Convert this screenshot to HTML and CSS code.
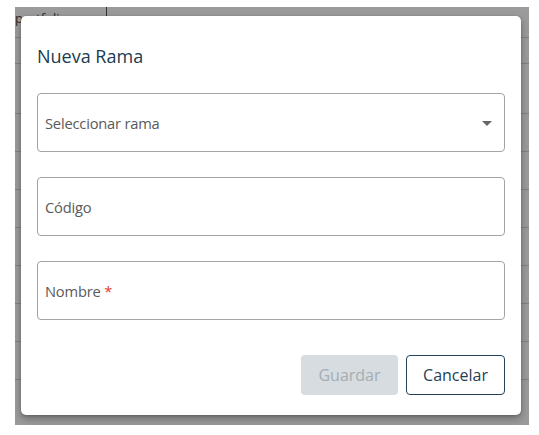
FILE: index.html
```html
<!DOCTYPE html>
<html lang="es">
<head>
<meta charset="utf-8">
<title>Nueva Rama</title>
<link rel="stylesheet" href="styles.css">
</head>
<body>
<div class="stage">
  <div class="table">
    <div class="row r1"><span class="cell c1">portfolio</span><span class="cell c2"></span></div>
    <div class="row r2"></div>
    <div class="row r3"></div>
    <div class="row r4"></div>
    <div class="row r4"></div>
    <div class="row r4"></div>
    <div class="row r4"></div>
    <div class="row r4"></div>
    <div class="row r4"></div>
    <div class="row r4"></div>
  </div>
  <div class="dialog" role="dialog">
    <h2 class="title">Nueva Rama</h2>
    <div class="fields">
      <div class="field select">
        <span class="label">Seleccionar rama</span>
        <svg class="caret" width="10" height="5" viewBox="0 0 10 5"><path d="M0 0h10L5 5z" fill="#666"/></svg>
      </div>
      <div class="field">
        <span class="label">Código</span>
      </div>
      <div class="field">
        <span class="label">Nombre <span class="req">*</span></span>
      </div>
    </div>
    <div class="actions">
      <button class="btn btn-save" disabled>Guardar</button>
      <button class="btn btn-cancel">Cancelar</button>
    </div>
  </div>
</div>
</body>
</html>
```

FILE: styles.css
```css
html, body {
  margin: 0;
  padding: 0;
  background: #ffffff;
}
body {
  padding: 7px 10px 10px 15px;
  font-family: "Open Sans", "Noto Sans", sans-serif;
}
.stage {
  position: relative;
  width: 514px;
  height: 418px;
  background: #9b9b9b;
  overflow: hidden;
}
.table {
  display: flex;
  flex-direction: column;
}
.row {
  box-sizing: border-box;
  border-bottom: 1px solid #818181;
  display: flex;
}
.r1 { height: 31px; }
.r2 { height: 26px; }
.r3 { height: 50px; }
.r4 { height: 38px; }
.cell {
  box-sizing: border-box;
  height: 100%;
  font-size: 13px;
  color: #2a2a2a;
  padding: 5px 0 0 0;
}
.c1 {
  width: 92px;
  border-right: 1px solid #333;
  height: 10px;
  line-height: 14px;
  padding-top: 4px;
  overflow: visible;
}
.dialog {
  position: absolute;
  left: 6px;
  top: 9px;
  width: 500px;
  height: 399px;
  box-sizing: border-box;
  background: #ffffff;
  border-radius: 5px;
  box-shadow: 0 4px 9px rgba(0,0,0,0.28), 0 1px 3px rgba(0,0,0,0.2);
  padding: 27px 16px 20px 16px;
  display: flex;
  flex-direction: column;
}
.title {
  margin: 0;
  font-size: 18px;
  font-weight: 400;
  line-height: 26px;
  color: #1a3c50;
}
.fields {
  margin-top: 24px;
  display: flex;
  flex-direction: column;
  gap: 25px;
}
.field {
  box-sizing: border-box;
  height: 59px;
  border: 1px solid #a3a3a3;
  border-radius: 4px;
  display: flex;
  align-items: center;
  padding: 0 12px 0 7px;
}
.label {
  font-size: 14.7px;
  color: #5a5a5a;
  letter-spacing: -0.2px;
}
.req {
  color: #e53935;
}
.select {
  justify-content: space-between;
}
.caret {
  display: block;
  margin-top: 1px;
}
.actions {
  margin-top: 35px;
  display: flex;
  justify-content: flex-end;
  gap: 8px;
}
.btn {
  box-sizing: border-box;
  height: 40px;
  border-radius: 4px;
  font-family: "Open Sans", "Noto Sans", sans-serif;
  font-size: 16px;
  padding: 0;
}
.btn-save {
  width: 97px;
  background: #d6dcdf;
  border: none;
  color: #a5adb2;
}
.btn-cancel {
  width: 99px;
  background: #ffffff;
  border: 1px solid #24435a;
  color: #1f3f55;
}
```
